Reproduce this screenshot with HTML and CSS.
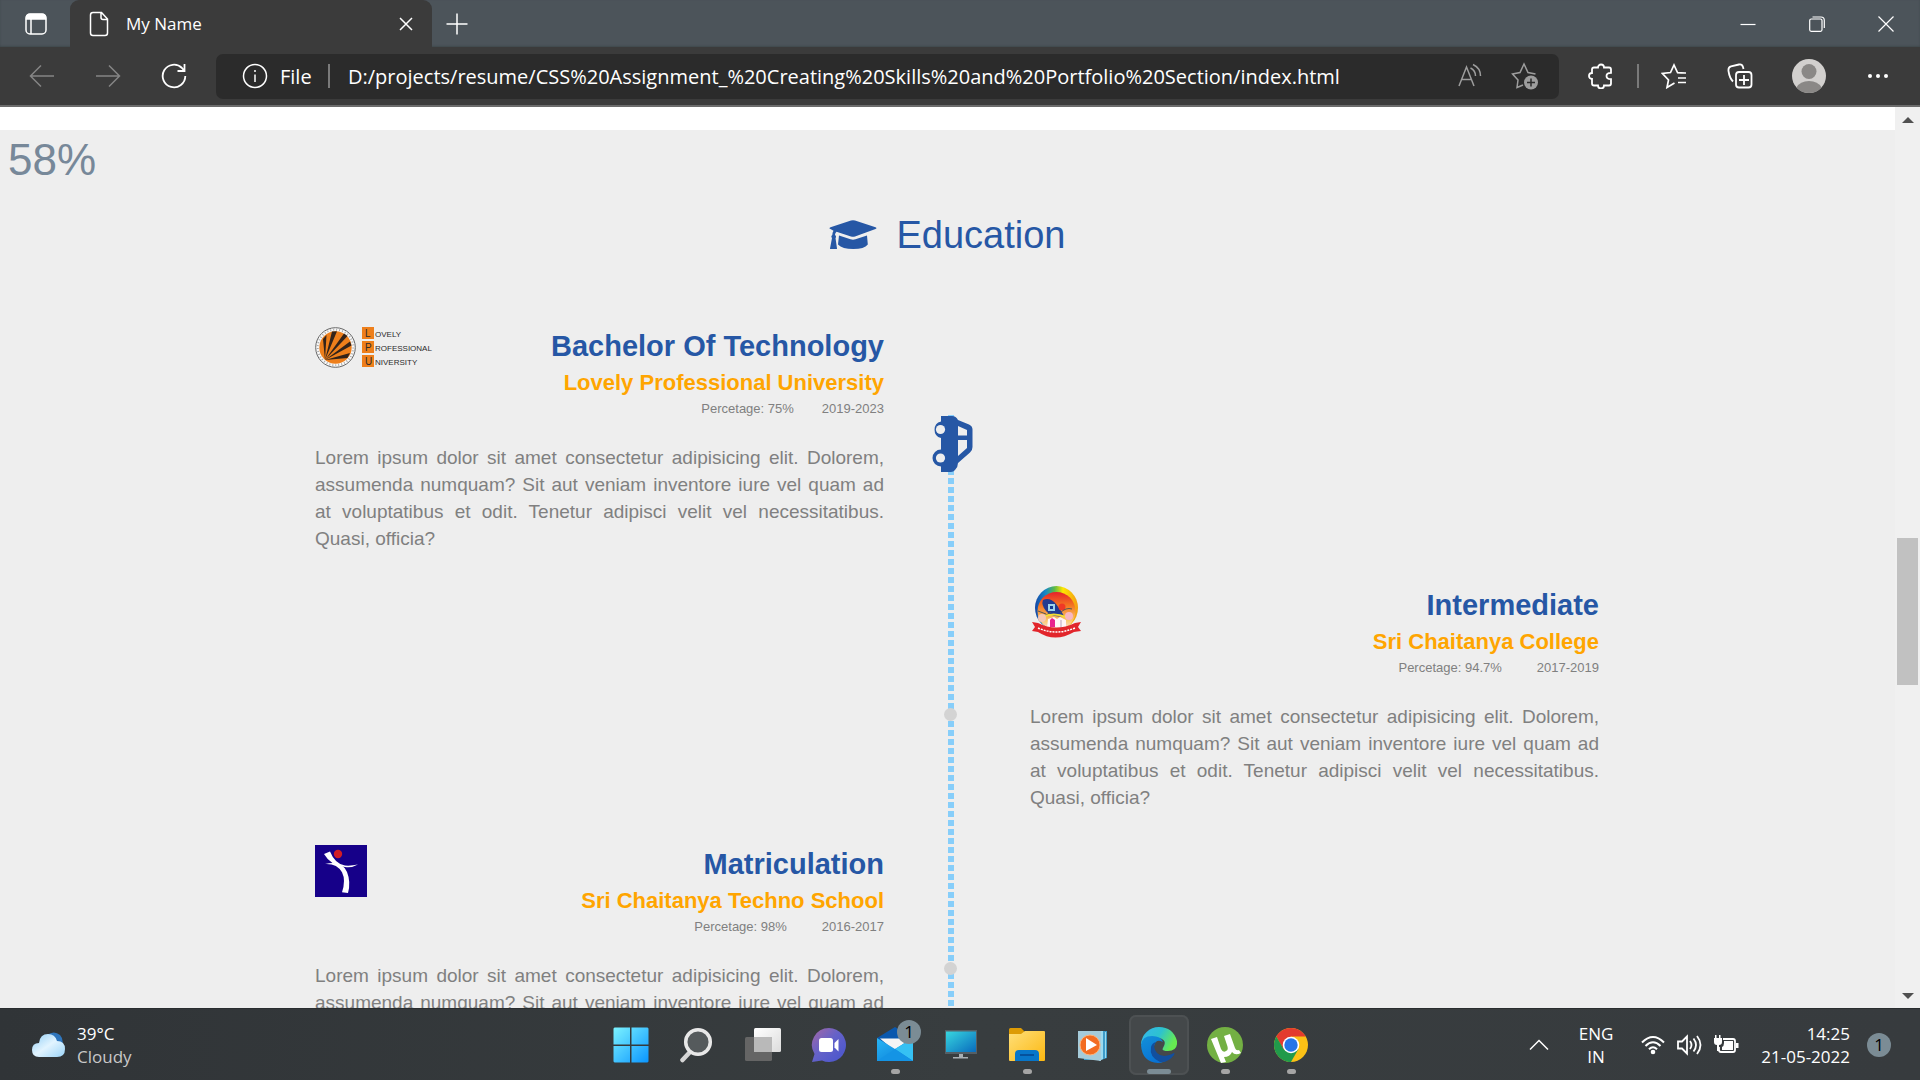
FILE: index.html
```html
<!DOCTYPE html>
<html lang="en">
<head>
<meta charset="utf-8">
<title>My Name</title>
<link rel="stylesheet" href="styles.css">
</head>
<body>
<div class="window">
  <header class="titlebar">
    <button class="tab-actions" aria-label="Tab actions">
      <svg class="icon" width="24" height="24" viewBox="0 0 24 24"><rect x="2" y="2" width="20" height="20" rx="4"/><path d="M2.500 7V5.500q0-3 3-3h13q3 0 3 3V7z" fill="#fff"/><path d="M7 7v15"/></svg>
    </button>
    <div class="tab">
      <svg class="icon" width="20" height="26" viewBox="0 0 20 26"><path d="M4 1.500h8.500l6 6.500V22q0 2.500-2.500 2.500H4Q1.500 24.500 1.500 22V4Q1.500 1.500 4 1.500zM12 2v4.500q0 2 2 2h4.500"/></svg>
      <span class="tab-title">My Name</span>
      <button class="tab-close" aria-label="Close tab"><svg class="icon" width="16" height="16" viewBox="0 0 16 16"><path d="M2 2l12 12M14 2L2 14"/></svg></button>
    </div>
    <button class="new-tab" aria-label="New tab"><svg class="icon" width="22" height="22" viewBox="0 0 22 22"><path d="M11 .5v21M.5 11h21"/></svg></button>
    <div class="window-controls">
      <button aria-label="Minimize"><svg class="icon thin" width="16" height="16" viewBox="0 0 16 16"><path d="M.5 8.500h15"/></svg></button>
      <button aria-label="Restore"><svg class="icon thin" width="16" height="16" viewBox="0 0 16 16"><rect x=".7" y="3" width="12.300" height="12.300" rx="1.500"/><path d="M3.500 1h8.500q3.300 0 3.300 3.300V12"/></svg></button>
      <button aria-label="Close"><svg class="icon thin" width="16" height="16" viewBox="0 0 16 16"><path d="M.5.5l15 15M15.500.5l-15 15"/></svg></button>
    </div>
  </header>

  <nav class="toolbar" aria-label="Browser toolbar">
    <button class="tool dim" aria-label="Back"><svg class="icon" width="26" height="24" viewBox="0 0 26 24"><path d="M25 12H1.500M12 1.500L1.500 12 12 22.500"/></svg></button>
    <button class="tool dim" aria-label="Forward"><svg class="icon" width="26" height="24" viewBox="0 0 26 24"><path d="M1 12h23.500M14 1.500L24.500 12 14 22.500"/></svg></button>
    <button class="tool" aria-label="Refresh"><svg class="icon" width="26" height="26" viewBox="0 0 26 26"><path d="M24.300 13A11.300 11.300 0 1 1 21 5l2 2.500M23.500 1v7h-7" stroke-width="1.800"/></svg></button>
    <div class="address">
      <svg class="icon" width="26" height="26" viewBox="0 0 26 26"><circle cx="13" cy="13" r="11.500"/><path d="M13 11.500V19M13 7v2"/></svg>
      <label class="scheme" for="url">File</label>
      <span class="divider"></span>
      <input id="url" class="url" type="text" value="D:/projects/resume/CSS%20Assignment_%20Creating%20Skills%20and%20Portfolio%20Section/index.html">
      <button class="in-tool" aria-label="Read aloud"><svg class="icon" width="26" height="26" viewBox="0 0 26 26"><path d="M2 23L9.500 4 17 23M5 16.500h9M13.500 5q5 2.500 5 8M16 1.500q7.500 3.500 7.500 11.500"/></svg></button>
      <button class="in-tool" aria-label="Add to favorites"><svg class="icon" width="28" height="28" viewBox="0 0 28 28"><path d="M12 23l-6 2.500 1-7.500-5.500-6L9 10.500 13 2l4 8.500 7.500 1.500"/><circle cx="20" cy="20.500" r="7" fill="#9d9d9d" stroke="none"/><path d="M20 16.500v8M16 20.500h8" stroke="#2b2b2b"/></svg></button>
    </div>
    <button class="tool" aria-label="Extensions"><svg class="icon" width="26" height="26" viewBox="0 0 26 26"><path d="M6 4.500h4a3 3 0 0 1 6 0h5q2 0 2 2v3.300q-4.500 0-4.500 3.200T23 16.200v4.300q0 2-2 2h-5a3 3 0 0 1-6 0H6q-2 0-2-2V16a3 3 0 0 1 0-6V6.500q0-2 2-2z" stroke-width="1.800"/></svg></button>
    <span class="divider tool-divider"></span>
    <button class="tool" aria-label="Favorites"><svg class="icon" width="26" height="26" viewBox="0 0 26 26"><path d="M13.500 20L6 24.500 7.500 17 1.500 10.500 9.500 9.500 13 2l3.500 7.500L24.500 10M17 15h8M17 19.500h8M16 10h9" stroke-width="1.700"/></svg></button>
    <button class="tool" aria-label="Collections"><svg class="icon" width="26" height="26" viewBox="0 0 26 26"><rect x="9" y="9" width="15.500" height="15.500" rx="3" stroke-width="1.800"/><path d="M17 12v10M12 17h10M6 18.500Q2.500 15 1.500 8 1 4 4 3.300L12 1.500q3-.7 4 2.500l.5 2" stroke-width="1.800"/></svg></button>
    <button class="tool profile" aria-label="Profile"><svg width="34" height="34" viewBox="0 0 34 34"><circle cx="17" cy="17" r="17" fill="#d2d0ce"/><circle cx="17" cy="12.500" r="7.500" fill="#8a8886"/><path d="M4.500 28.500Q8 22 17 22t12.500 6.500Q25 34 17 34T4.500 28.500z" fill="#8a8886"/></svg></button>
    <button class="tool" aria-label="Settings and more"><svg width="22" height="6" viewBox="0 0 22 6"><g fill="#fff"><circle cx="3" cy="3" r="2"/><circle cx="11" cy="3" r="2"/><circle cx="19" cy="3" r="2"/></g></svg></button>
  </nav>

  <div class="viewport">
    <main class="page">
      <div class="section-edge"></div>
      <div class="percent">58%</div>
      <h1 class="heading">
        <svg width="48" height="30" viewBox="0 0 48 30" fill="#2657a5"><path d="M22 .5q2-.7 4 0l20.500 6.700q2 .8 0 1.700L26 16.500q-2 .7-4 0L7.500 11.700Q6 13 6 15q1.800 1.300.5 3L8 28.500q0 .5-.5.500h-6q-.5 0-.5-.5L3 18q-1.500-1.600.3-3 0-2.500 1.200-4.200L1.500 9q-2-.9 0-1.700z"/><path d="M10 15.500l11.500 3.800q2.500.8 5 0L38 15.500l.8 9q-3.500 4.500-14.500 4.500T9 24.500z"/></svg>
        <span>Education</span>
      </h1>

      <section class="timeline">
        <div class="track">
          <svg class="car" width="41" height="58" viewBox="0 0 41 58"><path d="M9 1h11q4 0 6 4l11 4.500q3.500 1.500 3.500 5V32q0 3.500-2.500 5.500L26 48q0 4-3 7-1.500 2-4 2H9v-5.500A8.500 8.500 0 0 1 9 34.500v-11.500A8.500 8.500 0 0 1 9 6.500z" fill="#2657a5"/><path d="M26 11l9 4v5.500h-9zM26 25h9v8l-9 8z" fill="#eee"/><circle cx="8.500" cy="14.500" r="4.600" fill="#eee"/><circle cx="8.500" cy="43" r="4.600" fill="#eee"/></svg>
          <span class="stop stop-first"></span>
          <span class="stop stop-second"></span>
        </div>

        <article class="entry left first">
          <div class="entry-head">
            <svg width="118" height="41" viewBox="0 0 118 41" role="img" aria-label="Lovely Professional University logo">
              <circle cx="20.500" cy="20.500" r="19.800" fill="#f8f8f8" stroke="#666" stroke-width="1"/><circle cx="20.500" cy="20.500" r="17.800" fill="none" stroke="#aaa" stroke-width="2" stroke-dasharray="1 2"/>
              <circle cx="20.500" cy="20.500" r="16.200" fill="#ee7f1b"/>
              <g fill="#33231a"><path d="M10 33L8 12l3.500-4zM10 33l7-28.500 5-.2zM10 33L29 6.500l3.500 2.500zM10 33l25-18.500 1.500 4zM10 33l25-7-2.500 5z"/></g>
              <g fill="#ee7f1b"><path d="M47 0h12v12H47zM47 14h12v12H47zM47 28h12v12H47z"/></g>
              <g class="logo-text"><text class="initial" x="50" y="10">L</text><text x="60" y="10">OVELY</text><text class="initial" x="50" y="24">P</text><text x="60" y="24">ROFESSIONAL</text><text class="initial" x="50" y="38">U</text><text x="60" y="38">NIVERSITY</text></g>
            </svg>
            <div class="entry-titles">
              <h2>Bachelor Of Technology</h2>
              <h3>Lovely Professional University</h3>
              <p class="meta"><span>Percetage: 75%</span><span>2019-2023</span></p>
            </div>
          </div>
          <p class="copy">Lorem ipsum dolor sit amet consectetur adipisicing elit. Dolorem, assumenda numquam? Sit aut veniam inventore iure vel quam ad at voluptatibus et odit. Tenetur adipisci velit vel necessitatibus. Quasi, officia?</p>
        </article>

        <article class="entry right second">
          <div class="entry-head">
            <svg width="52" height="52" viewBox="0 0 52 52" role="img" aria-label="Sri Chaitanya College logo">
              <defs><linearGradient id="ring" x1="0" x2="1"><stop offset="0" stop-color="#1546a5"/><stop offset=".25" stop-color="#1689c8"/><stop offset=".45" stop-color="#5bb947"/><stop offset=".65" stop-color="#ffe600"/><stop offset="1" stop-color="#f39a16"/></linearGradient><linearGradient id="sky" x2="0" y2="1"><stop offset="0" stop-color="#e6212b"/><stop offset=".35" stop-color="#f37521"/><stop offset=".75" stop-color="#fbc86b"/><stop offset="1" stop-color="#f8dce6"/></linearGradient></defs>
              <ellipse cx="26.500" cy="22" rx="21.500" ry="22" fill="url(#ring)"/><ellipse cx="26.500" cy="25" rx="19" ry="19" fill="url(#sky)"/>
              <path d="M13 14q7-3 13 4 5 6 8 12-12 2-18-5-5-6-3-11z" fill="#223b91"/><path d="M18 18h7v7h-7z" fill="#9ed3ec"/><path d="M20 20h3v3h-3z" fill="#173a91"/><circle cx="32" cy="21" r="3.500" fill="#ef3926"/><path d="M8 25l8 3M30 27q6-6 12-4M13 31l8-5" stroke="#555" fill="none"/><path d="M13 31q10-5 23 0" stroke="#f4df32" stroke-width="2" fill="none"/>
              <circle cx="39" cy="30" r="4" fill="#f7b7c1"/><circle cx="12" cy="32" r="4" fill="#f7c7b5"/>
              <path d="M18 33l6-2 3 2 3-2 6 3v8H17z" fill="#fff4f7"/><path d="M20 34l2-2 3 2v7h-5z" fill="#e9218e"/><path d="M31 34v8" stroke="#b8a2bd"/>
              <path d="M2 36l6 1q18 9 37 0l6-1-3 5 3 4-7 1q-19 11-36 0l-6-1 3-4z" fill="#e2252b"/><path d="M8 42q18 8 37 0" fill="none" stroke="#fff" stroke-width="1.500" stroke-dasharray="2 1"/>
            </svg>
            <div class="entry-titles">
              <h2>Intermediate</h2>
              <h3>Sri Chaitanya College</h3>
              <p class="meta wide"><span>Percetage: 94.7%</span><span>2017-2019</span></p>
            </div>
          </div>
          <p class="copy">Lorem ipsum dolor sit amet consectetur adipisicing elit. Dolorem, assumenda numquam? Sit aut veniam inventore iure vel quam ad at voluptatibus et odit. Tenetur adipisci velit vel necessitatibus. Quasi, officia?</p>
        </article>

        <article class="entry left third">
          <div class="entry-head">
            <svg width="52" height="52" viewBox="0 0 52 52" role="img" aria-label="Sri Chaitanya Techno School logo"><path d="M0 0h52v52H0z" fill="#160089"/><circle cx="23" cy="9" r="4.200" fill="#d01c24"/><g fill="#fff"><path d="M9 9l6-2.500Q20 19 30 20.500q6 .5 13-1-6 3.500-13 2.500Q16 21 9 9z"/><path d="M10 19q17-4 22 8 4 10 1 21l-6-.7q4-12 0-20-5-9-17-8.300z"/></g></svg>
            <div class="entry-titles">
              <h2>Matriculation</h2>
              <h3>Sri Chaitanya Techno School</h3>
              <p class="meta wide"><span>Percetage: 98%</span><span>2016-2017</span></p>
            </div>
          </div>
          <p class="copy">Lorem ipsum dolor sit amet consectetur adipisicing elit. Dolorem, assumenda numquam? Sit aut veniam inventore iure vel quam ad at voluptatibus et odit. Tenetur adipisci velit vel necessitatibus. Quasi, officia?</p>
        </article>
      </section>
    </main>
    <div class="scrollbar">
      <svg width="12" height="6" viewBox="0 0 12 6"><path d="M6 0l6 6H0z" fill="#505050"/></svg>
      <div class="scroll-area"><div class="thumb"></div></div>
      <svg width="12" height="6" viewBox="0 0 12 6"><path d="M0 0h12L6 6z" fill="#505050"/></svg>
    </div>
  </div>

  <footer class="taskbar">
    <div class="weather">
      <svg width="36" height="28" viewBox="0 0 36 28"><defs><linearGradient id="cloud" x2="1" y2="1"><stop offset="0" stop-color="#8ecdf5"/><stop offset=".5" stop-color="#e2f4ff"/><stop offset="1" stop-color="#9bd4f8"/></linearGradient></defs><path d="M17 4q7-5 13 0 4 4 2 12z" fill="#2f76bd"/><path d="M9 26q-7 0-7-7t7-7Q10 3 18 3q7 0 9 7 8 0 8 8t-8 8z" fill="url(#cloud)"/></svg>
      <div><div>39°C</div><div class="muted">Cloudy</div></div>
    </div>
    <div class="apps">
      <button class="app" aria-label="Start"><svg width="36" height="36" viewBox="0 0 36 36"><defs><linearGradient id="win" x2="1" y2="1"><stop offset="0" stop-color="#7cf3ff"/><stop offset="1" stop-color="#0a95ff"/></linearGradient></defs><path d="M1.500.5H17v17H.5v-16zM18.500.5h16l1 1v16h-17zM.5 19H17v16.500H1.500l-1-1zM18.500 19h17v15.500l-1 1h-16z" fill="url(#win)"/></svg></button>
      <button class="app" aria-label="Search"><svg width="36" height="36" viewBox="0 0 36 36"><path d="M11 25l-7.500 8" stroke="#d5d5d5" stroke-width="4.500" stroke-linecap="round"/><circle cx="19" cy="15" r="12.300" fill="#555a5c" stroke="#e8e8e8" stroke-width="3.500"/></svg></button>
      <button class="app" aria-label="Task view"><svg width="38" height="36" viewBox="0 0 38 36"><defs><linearGradient id="pane" x2="1" y2="1"><stop offset="0" stop-color="#fff"/><stop offset="1" stop-color="#dcdcdc"/></linearGradient></defs><rect x="1" y="10" width="27" height="24" rx="1.500" fill="#656565"/><rect x="10" y="1" width="27" height="24" rx="1.500" fill="url(#pane)"/><path d="M10 10h18v15H11.500q-1.500 0-1.500-1.500z" fill="#b9b9b9"/></svg></button>
      <button class="app" aria-label="Chat"><svg width="36" height="36" viewBox="0 0 36 36"><defs><linearGradient id="chat" x2="1" y2="1"><stop offset="0" stop-color="#a567a5"/><stop offset=".45" stop-color="#6562c8"/><stop offset=".8" stop-color="#5159cc"/></linearGradient></defs><path d="M18 1a17 17 0 1 1-7 32.500L1 35l2.500-8A17 17 0 0 1 18 1z" fill="url(#chat)"/><rect x="8" y="11" width="14" height="14" rx="2.500" fill="#fff"/><path d="M23.500 16l4-4v12.500l-4-4z" fill="#fff"/></svg></button>
      <button class="app running" aria-label="Mail"><svg width="36" height="36" viewBox="0 0 36 36"><defs><linearGradient id="mail" x2="1" y2="1"><stop offset="0" stop-color="#28b5f4"/><stop offset="1" stop-color="#087bd8"/></linearGradient></defs><path d="M0 11L18 0l18 11-18 16z" fill="#0a58ae"/><path d="M3 11.500h30L18 24z" fill="#f5f5f5"/><path d="M0 11l18 11 18-11v23H0z" fill="url(#mail)"/><path d="M18 22l18-11v23z" fill="#36c1f3"/><path d="M18 22l18 12H0L18 22z" fill="#1494e5"/></svg><span class="badge mail-badge">1</span></button>
      <button class="app" aria-label="Desktop"><svg width="36" height="36" viewBox="0 0 36 36"><defs><linearGradient id="screen" x2="1" y2="1"><stop offset="0" stop-color="#37d6df"/><stop offset="1" stop-color="#096bbd"/></linearGradient></defs><path d="M2 3h32v24H2z" fill="#555f65"/><path d="M3 4.500h30V25H3z" fill="url(#screen)"/><path d="M16 27h4v3h5v1.500H10V30h6z" fill="#a9afb3"/></svg></button>
      <button class="app running" aria-label="File Explorer"><svg width="36" height="36" viewBox="0 0 36 36"><defs><linearGradient id="folder" x2="1" y2="1"><stop offset="0" stop-color="#ffdf79"/><stop offset="1" stop-color="#fcb811"/></linearGradient></defs><path d="M0 2.500Q0 1 1.500 1H12l4 4h10v8H0z" fill="#dd9b05"/><path d="M0 7h12l4-3h19q1 0 1 1v28q0 1-1 1H1q-1 0-1-1z" fill="url(#folder)"/><path d="M6 34V27q0-4 4-4h16q4 0 4 4v7z" fill="#0876c9"/><path d="M11 28h14" stroke="#04468c" stroke-width="1.500"/></svg></button>
      <button class="app" aria-label="Media Player"><svg width="36" height="36" viewBox="0 0 36 36"><path d="M9 4h23v27l-6 2H9z" fill="#3f9cc9"/><path d="M24 4h4v28l-4 2zM30 5h1v26h-1z" fill="#9bdaf0"/><path d="M3 4h23v30L3 31z" fill="#a5cbda"/><circle cx="15" cy="18" r="10" fill="#f36c21" stroke="#ffb37a"/><path d="M11 11l11 7-11 6z" fill="#fff"/></svg></button>
      <button class="app running active" aria-label="Microsoft Edge" aria-pressed="true"><svg width="36" height="36" viewBox="0 0 36 36"><defs><linearGradient id="edge-a" x2="1" y2=".4"><stop offset="0" stop-color="#35b6ee"/><stop offset=".55" stop-color="#2dc2cf"/><stop offset="1" stop-color="#66eb51"/></linearGradient><linearGradient id="edge-b" x2=".6" y2="1"><stop offset="0" stop-color="#1390d8"/><stop offset="1" stop-color="#0871d4"/></linearGradient></defs><path d="M0 17A18 18 0 0 1 18 0q14 0 18 14 1 10-9 10-7 0-5-3 5-8-4-10z" fill="url(#edge-a)"/><path d="M0 18Q1 9 11 9q9 0 11 6-7-4-9 4-2 13 15 12Q23 36 17 36 1 35 0 18z" fill="url(#edge-b)"/><path d="M15 15q-4 5 1 11 6 6 17 0 1 0 0 2-6 8-14 7Q8 30 10 20q1-4 5-5z" fill="#124f9e"/></svg></button>
      <button class="app running" aria-label="uTorrent"><svg width="36" height="36" viewBox="0 0 36 36"><circle cx="18" cy="18" r="18" fill="#73b043"/><path d="M4 12l6-2 4 12q2 4 5 2 3-1 1-6l-3-9 6-2 5 14q1 3 4 2l2 3q-6 3-9-1-2 5-8 5l2 5-5 1z" fill="#fff"/></svg></button>
      <button class="app running" aria-label="Google Chrome"><svg width="36" height="36" viewBox="0 0 36 36"><circle cx="18" cy="18" r="17" fill="#fbc116"/><path d="M3.300 9.500A17 17 0 0 1 32.700 9.500H18l-7.500 13z" fill="#e33b2e"/><path d="M3.300 9.500l7.400 12.800L18 26.500 18 35A17 17 0 0 1 3.300 9.500z" fill="#219a4b"/><path d="M25.400 22L18 35l-1-9z" fill="#219a4b"/><circle cx="18" cy="18" r="8.300" fill="#fff"/><circle cx="18" cy="18" r="6.700" fill="#2675e8"/></svg></button>
    </div>
    <div class="tray">
      <button class="chevron" aria-label="Show hidden icons"><svg class="icon" width="20" height="12" viewBox="0 0 20 12"><path d="M1 10.500l9-9 9 9"/></svg></button>
      <div class="language"><div>ENG</div><div>IN</div></div>
      <div class="status">
        <svg class="icon" width="24" height="20" viewBox="0 0 24 20"><path d="M1 7.500q11-11 22 0M4.500 11q7.500-7.500 15 0M8 14.300q4-4 8 0" stroke-width="2"/><circle cx="12" cy="17" r="2.300" fill="#fff" stroke="none"/></svg>
        <svg class="icon" width="26" height="22" viewBox="0 0 26 22"><path d="M2 7.500h4l5-5v17l-5-5H2zM14 7q3 4 0 8M17.500 4.500q5 6.500 0 13M21 2q7 9 0 18" stroke-width="1.800"/></svg>
        <svg class="icon" width="26" height="20" viewBox="0 0 26 20"><path d="M10 4h10q2 0 2 2v9q0 2-2 2H8q-2 0-2-2v-3" stroke-width="1.800"/><path d="M11 6h9v9H9v-3q2-1 2-4zM23 8h2.500v5H23zM1 3h1V0h1.500v3H6V0h1.500v3H9v4q0 3-3 3v6H4v-6Q1 10 1 7z" fill="#fff" stroke="none"/></svg>
      </div>
      <div class="clock"><div>14:25</div><div>21-05-2022</div></div>
      <span class="badge">1</span>
    </div>
  </footer>
</div>
</body>
</html>
```
FILE: styles.css
```css
* { box-sizing: border-box; }
body, h1, h2, h3, p { margin: 0; }
button { padding: 0; border: 0; background: none; color: inherit; font: inherit; display: flex; align-items: center; justify-content: center; }
svg { display: block; flex: none; }
.icon { fill: none; stroke: currentColor; stroke-width: 1.5; }
.thin { stroke-width: 1.2; }

.window { height: 100vh; display: flex; flex-direction: column; overflow: hidden; font-family: "Open Sans", "Noto Sans", sans-serif; color: #fff; }

.titlebar { flex: none; height: 47px; display: flex; background: #4c545a; box-shadow: inset 0 -1px 2px #3f484c; }
.tab-actions { width: 70px; padding-left: 2px; }
.tab { width: 362px; display: flex; align-items: center; padding: 0 18px 0 19px; gap: 17px; background: #3b3b3b; border-radius: 9px 9px 0 0; font-size: 17px; }
.tab-title { flex: 1; }
.new-tab { width: 50px; }
.window-controls { display: flex; margin-left: auto; }
.window-controls button { width: 69px; }

.toolbar { flex: none; height: 60px; display: flex; align-items: center; padding: 0 9px; background: #3b3b3b; border-bottom: 2px solid #6b6b6b; }
.tool { width: 66px; height: 45px; }
.profile { width: 72px; }
.dim { color: #858585; }
.address { flex: 1; min-width: 0; height: 45px; margin: 0 9px; padding: 0 20px 0 26px; display: flex; align-items: center; background: #2b2b2b; border-radius: 7px; font-size: 20px; }
.scheme { margin-left: 12px; width: 48px; }
.divider { width: 2px; height: 24px; background: #7a7a7a; }
.tool-divider { margin: 0 2px 0 3px; }
.url { flex: 1; min-width: 0; margin-left: 18px; padding: 0; border: 0; outline: 0; background: none; color: inherit; font: inherit; }
.in-tool { color: #9d9d9d; margin-left: 28px; }

.viewport { flex: 1; min-height: 0; display: flex; }
.page { flex: 1; min-width: 0; overflow: hidden; background: #eee; color: #808080; font-family: "Liberation Sans", Arial, sans-serif; }
.section-edge { height: 23px; background: #fff; }
.percent { padding: 4px 8px 0; font-size: 44px; line-height: 52px; color: #778899; }
.heading { display: flex; align-items: center; justify-content: center; gap: 19px; margin-top: 27px; font-size: 38px; line-height: 44px; font-weight: 400; color: #2657a5; }

.timeline { display: grid; grid-template-columns: 1fr 146px 1fr; max-width: 1303px; margin: 70px auto 0; padding-left: 19px; }
.track { position: relative; grid-column: 2; grid-row: 1 / span 3; justify-self: start; width: 6px; margin: 88px 0 0 64px; background: repeating-linear-gradient(#87cefa 0 6px, #eee 6px 9px); }
.car { position: absolute; left: -16px; top: 0; }
.stop { position: absolute; left: -4px; width: 13px; height: 13px; border-radius: 50%; background: #d3d3d3; }
.stop-first { top: 293px; }
.stop-second { top: 547px; }
.entry { height: 259px; }
.left { grid-column: 1; }
.right { grid-column: 3; }
.first { grid-row: 1; }
.second { grid-row: 2; }
.third { grid-row: 3; }
.entry-head { display: flex; justify-content: space-between; }
.entry-titles { text-align: right; }
.entry h2 { padding-top: 2px; font-size: 29px; line-height: 35px; color: #2657a5; }
.entry h3 { font-size: 22px; line-height: 37px; color: #ffa500; }
.meta { display: flex; justify-content: flex-end; gap: 28px; font-size: 13px; line-height: 16px; }
.wide { gap: 35px; }
.copy { margin-top: 27px; font-size: 19px; line-height: 27px; text-align: justify; }
.logo-text { font: 8px "Liberation Sans", sans-serif; fill: #2b2b2b; }
.initial { font-size: 10px; }

.scrollbar { width: 25px; padding: 10px 0 9px; display: flex; flex-direction: column; align-items: center; background: #f0f0f0; }
.scroll-area { flex: 1; width: 21px; display: flex; flex-direction: column; }
.scroll-area::before { content: ""; flex: 415; }
.scroll-area::after { content: ""; flex: 308; }
.thumb { flex: 147; background: #c1c1c1; }

.taskbar { flex: none; height: 72px; display: grid; grid-template-columns: 1fr auto 1fr; background: linear-gradient(90deg, #303437, #383d3f 50%, #373b3e); border-top: 1px solid #292d2f; font-size: 17px; line-height: 23px; }
.weather { display: flex; align-items: center; gap: 11px; padding-left: 30px; }
.muted { color: #c8c8c8; }
.apps { display: flex; padding-left: 2px; }
.app { position: relative; width: 60px; height: 60px; margin: 6px 3px; border-radius: 7px; }
.active { background: #44484a; box-shadow: inset 0 0 0 2px #4d5153; }
.running::after { content: ""; position: absolute; left: 50%; bottom: 1px; width: 9px; height: 5px; margin-left: -4px; border-radius: 3px; background: #a5a5a5; }
.active::after { width: 24px; margin-left: -12px; background: #7b8c95; }
.badge { width: 24px; height: 24px; border-radius: 50%; background: #7b8c95; color: #000; font-size: 17px; line-height: 24px; text-align: center; }
.mail-badge { position: absolute; right: 4px; top: 5px; }
.tray { display: flex; align-items: center; justify-content: flex-end; padding-right: 29px; }
.chevron { width: 20px; margin-right: 29px; }
.language { width: 36px; text-align: center; }
.status { display: flex; align-items: center; gap: 11px; margin-left: 27px; }
.clock { width: 111px; text-align: right; }
.tray .badge { margin-left: 17px; }
```
